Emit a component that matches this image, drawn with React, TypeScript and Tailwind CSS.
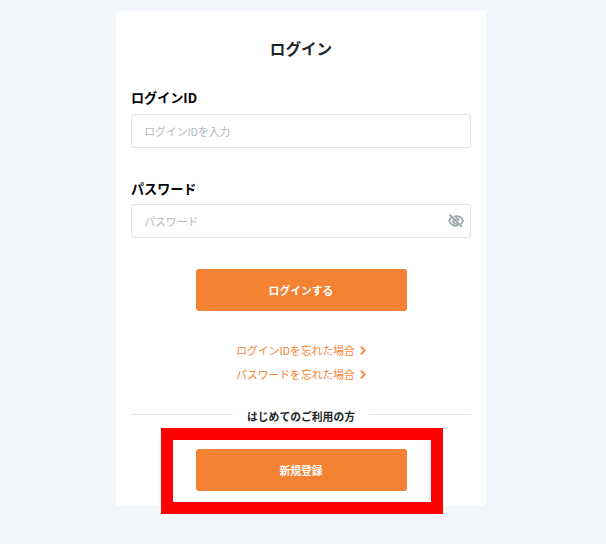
function EyeOff() {
  return (
    <svg viewBox="0 0 24 24" className="mb-px size-4 text-[#9aa5ac]" fill="none" stroke="currentColor" strokeWidth="2.8">
      <path d="M9 5.4C15 3.2 20.500 6 22.300 11.500 21.700 13.600 20.600 15.300 19 16.500M5 7C3.300 8.200 2.300 9.800 1.700 11.700 4 18 10 20.300 15.500 18.100" />
      <path d="M11.500 7.800a4 4 0 0 1 4.300 4.500M7.900 10.600a4.200 4.200 0 0 0 5.400 5.200" />
      <path d="M2.500 2.600 20.800 20.900" />
    </svg>
  );
}

function Field({ label, placeholder, secret }: { label: string; placeholder: string; secret?: boolean }) {
  return (
    <label className="block">
      <span className={`block h-[16px] text-[13.1px] font-bold leading-[16px] text-black ${secret ? "pt-px" : ""}`}>
        {label}
      </span>
      <span className="mt-2 flex h-[34px] items-center rounded-[3px] border border-[#e3e3e3] bg-white pl-[12.25px] pr-[6px]">
        <input
          type={secret ? "password" : "text"}
          placeholder={placeholder}
          className="mb-px h-4 min-w-0 flex-1 bg-transparent text-[10.8px] leading-4 outline-none placeholder:text-[#b5b9bd]"
        />
        {secret && <EyeOff />}
      </span>
    </label>
  );
}

function Button({ children }: { children: string }) {
  return (
    <button className="flex h-[42px] w-[211px] items-center justify-center rounded-[3px] bg-[#f58233] text-[10.8px] font-bold text-white">
      {children}
    </button>
  );
}

function HelpLink({ children }: { children: string }) {
  return (
    <a href="#" className="flex h-6 items-center gap-[5px] text-[10.8px] leading-6 text-[#f58233]">
      {children}
      <svg viewBox="0 0 6 9" className="mt-px h-[9px] w-[6px]" fill="none" stroke="currentColor" strokeWidth="1.8">
        <path d="M0.9 0.7 4.7 4.5 0.9 8.3" />
      </svg>
    </a>
  );
}

export default function App() {
  return (
    <div className="flex h-[544px] w-[606px] justify-center overflow-hidden bg-[#f2f5fa] pr-[4px] pt-[11px] font-['Noto_Sans_CJK_JP',sans-serif] text-[#212529]">
      <main className="flex h-[495px] w-[370.5px] flex-col rounded-[3px] bg-white px-[15.25px] pt-[25px]">
        <h1 className="text-center text-[15.6px] font-bold leading-6">ログイン</h1>
        <div className="mt-[30px] flex flex-col gap-[32px]">
          <Field label="ログインID" placeholder="ログインIDを入力" />
          <Field label="パスワード" placeholder="パスワード" secret />
        </div>
        <div className="mt-[31px] flex justify-center">
          <Button>ログインする</Button>
        </div>
        <div className="mt-[27px] flex flex-col items-center">
          <HelpLink>ログインIDを忘れた場合</HelpLink>
          <HelpLink>パスワードを忘れた場合</HelpLink>
        </div>
        <div className="mt-[22px] flex h-4 items-center gap-[14px]">
          <span className="mb-[3px] h-px flex-1 bg-[#e2e3e5]" />
          <span className="mb-px text-[10.8px] font-bold leading-4">はじめてのご利用の方</span>
          <span className="mb-[3px] h-px flex-1 bg-[#e2e3e5]" />
        </div>
        <div className="relative mt-[25px] flex justify-center">
          <Button>新規登録</Button>
          <div className="pointer-events-none absolute -top-[21px] left-[29.75px] h-[86px] w-[282px] border-[12px] border-[#ff0000]" />
        </div>
      </main>
    </div>
  );
}
